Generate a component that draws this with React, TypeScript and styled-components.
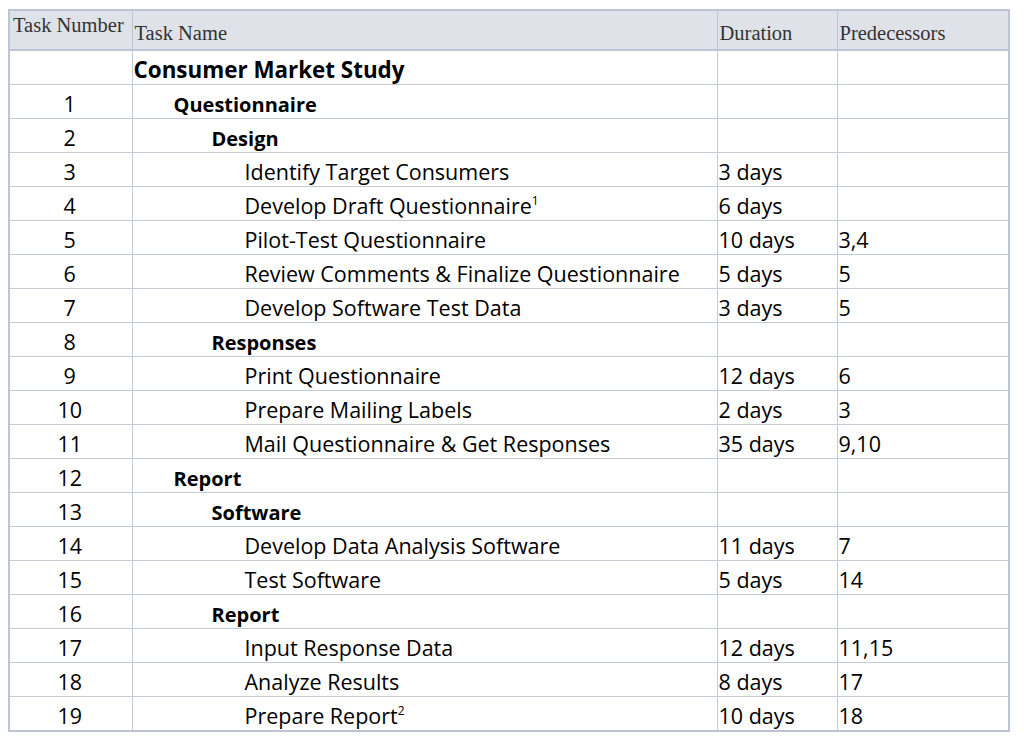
import styled, { createGlobalStyle } from "styled-components";

const GlobalStyle = createGlobalStyle`
  body {
    margin: 9px 8px;
    background: #ffffff;
  }
`;

const Table = styled.table`
  width: 1000px;
  border-collapse: collapse;
  border: 2px solid #bcc4d5;
  table-layout: fixed;
  color: #000;
`;

const HeadCell = styled.th<{ $top?: boolean }>`
  height: 40px;
  box-sizing: border-box;
  padding: ${({ $top }) => ($top ? "3px 2px 0 3px" : "7px 2px 0 2px")};
  vertical-align: ${({ $top }) => ($top ? "top" : "middle")};
  background: #dfe2e8;
  border: 1px solid #bcc4d5;
  border-bottom-width: 2px;
  font-family: "Liberation Serif", "DejaVu Serif", serif;
  font-size: 20.5px;
  line-height: 1.1;
  font-weight: normal;
  text-align: left;
  color: #333;
  white-space: nowrap;
`;

const Cell = styled.td<{ $center?: boolean }>`
  height: 28px;
  padding: 5px 3px 0 1px;
  border: 1px solid #c3cad9;
  font-family: "Open Sans", Lato, sans-serif;
  font-size: 21.5px;
  line-height: 1.2;
  text-align: ${({ $center }) => ($center ? "center" : "left")};
  vertical-align: middle;
  white-space: nowrap;
`;

const TaskName = styled.span<{ $level: number }>`
  display: inline-block;
  padding-left: ${({ $level }) => [0, 40, 78, 111][$level]}px;
  font-weight: ${({ $level }) => ($level < 3 ? 700 : 400)};
  font-size: ${({ $level }) => ($level === 0 ? 22.4 : $level < 3 ? 20 : 21.5)}px;

  sup {
    font-size: 12px;
    vertical-align: 9px;
    line-height: 0;
  }
`;

type Task = {
  num?: number;
  name: string;
  level: number;
  note?: string;
  duration?: string;
  pred?: string;
};

const tasks: Task[] = [
  { name: "Consumer Market Study", level: 0 },
  { num: 1, name: "Questionnaire", level: 1 },
  { num: 2, name: "Design", level: 2 },
  { num: 3, name: "Identify Target Consumers", level: 3, duration: "3 days" },
  { num: 4, name: "Develop Draft Questionnaire", level: 3, note: "1", duration: "6 days" },
  { num: 5, name: "Pilot-Test Questionnaire", level: 3, duration: "10 days", pred: "3,4" },
  { num: 6, name: "Review Comments & Finalize Questionnaire", level: 3, duration: "5 days", pred: "5" },
  { num: 7, name: "Develop Software Test Data", level: 3, duration: "3 days", pred: "5" },
  { num: 8, name: "Responses", level: 2 },
  { num: 9, name: "Print Questionnaire", level: 3, duration: "12 days", pred: "6" },
  { num: 10, name: "Prepare Mailing Labels", level: 3, duration: "2 days", pred: "3" },
  { num: 11, name: "Mail Questionnaire & Get Responses", level: 3, duration: "35 days", pred: "9,10" },
  { num: 12, name: "Report", level: 1 },
  { num: 13, name: "Software", level: 2 },
  { num: 14, name: "Develop Data Analysis Software", level: 3, duration: "11 days", pred: "7" },
  { num: 15, name: "Test Software", level: 3, duration: "5 days", pred: "14" },
  { num: 16, name: "Report", level: 2 },
  { num: 17, name: "Input Response Data", level: 3, duration: "12 days", pred: "11,15" },
  { num: 18, name: "Analyze Results", level: 3, duration: "8 days", pred: "17" },
  { num: 19, name: "Prepare Report", level: 3, note: "2", duration: "10 days", pred: "18" },
];

export default function App() {
  return (
    <>
      <GlobalStyle />
      <Table>
        <colgroup>
          <col style={{ width: 123 }} />
          <col style={{ width: 585 }} />
          <col style={{ width: 120 }} />
          <col style={{ width: 172 }} />
        </colgroup>
        <thead>
          <tr>
            <HeadCell $top>Task Number</HeadCell>
            <HeadCell>Task Name</HeadCell>
            <HeadCell>Duration</HeadCell>
            <HeadCell>Predecessors</HeadCell>
          </tr>
        </thead>
        <tbody>
          {tasks.map((t, i) => (
            <tr key={i}>
              <Cell $center>{t.num ?? ""}</Cell>
              <Cell>
                <TaskName $level={t.level}>
                  {t.name}
                  {t.note && <sup>{t.note}</sup>}
                </TaskName>
              </Cell>
              <Cell>{t.duration ?? ""}</Cell>
              <Cell>{t.pred ?? ""}</Cell>
            </tr>
          ))}
        </tbody>
      </Table>
    </>
  );
}
